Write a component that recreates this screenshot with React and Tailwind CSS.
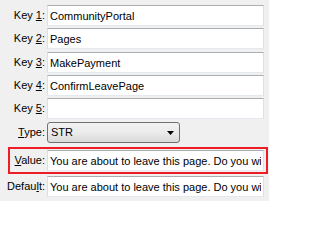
import React from "react";

const FONT = { fontFamily: '"Liberation Sans", Arial, sans-serif' };

const inputCls =
  "h-[21px] w-[217px] bg-white border border-t-[#abadb3] border-x-[#dbdfe6] border-b-[#e3e9ef] px-[2px] text-[11px] text-black outline-none";

// label with one underlined access-key letter
const Label = ({ before, keyChar, after, width = "w-[47px]" }) => (
  <span className={`${width} shrink-0 text-right pr-[2px] text-[11px] text-black`}>
    {before}
    <span className="underline">{keyChar}</span>
    {after}
  </span>
);

const KEYS = [
  { n: "1", value: "CommunityPortal", mt: "mt-[5px]" },
  { n: "2", value: "Pages", mt: "mt-[2px]" },
  { n: "3", value: "MakePayment", mt: "mt-[3px]" },
  { n: "4", value: "ConfirmLeavePage", mt: "mt-[2px]" },
  { n: "5", value: "", mt: "mt-[2px]" },
];

const MESSAGE = "You are about to leave this page. Do you wish to continue?";

export default function App() {
  return (
    <div className="w-[269px] h-[201px] bg-[#f0f0f0] overflow-hidden" style={FONT}>
      <div className="flex flex-col">
        {/* Key rows */}
        {KEYS.map((k) => (
          <div key={k.n} className={`flex items-center ${k.mt}`}>
            <Label before="Key " keyChar={k.n} after=":" />
            <input className={inputCls} defaultValue={k.value} readOnly />
          </div>
        ))}

        {/* Type select */}
        <div className="flex items-center mt-[3px]">
          <Label before="" keyChar="T" after="ype:" />
          <div className="h-[21px] w-[133px] rounded-[3px] border border-[#707070] bg-gradient-to-b from-[#f2f2f2] via-[#ebebeb] to-[#dadada] flex items-center justify-between pl-[3px] pr-[5px]">
            <span className="text-[11px] text-black">STR</span>
            <svg width="7" height="4" viewBox="0 0 7 4">
              <path d="M0 0 H7 L3.5 4 Z" fill="#000" />
            </svg>
          </div>
        </div>

        {/* Value (highlighted) */}
        <div className="ml-[8px] mt-[4px] w-[260px] h-[27px] border-2 border-[#ee1c24] flex items-center">
          <Label before="" keyChar="V" after="alue:" width="w-[37px]" />
          <input className={inputCls} defaultValue={MESSAGE} readOnly />
        </div>

        {/* Default */}
        <div className="flex items-center mt-[2px]">
          <Label before="Defau" keyChar="l" after="t:" />
          <input className={inputCls} defaultValue={MESSAGE} readOnly />
        </div>
      </div>
    </div>
  );
}
